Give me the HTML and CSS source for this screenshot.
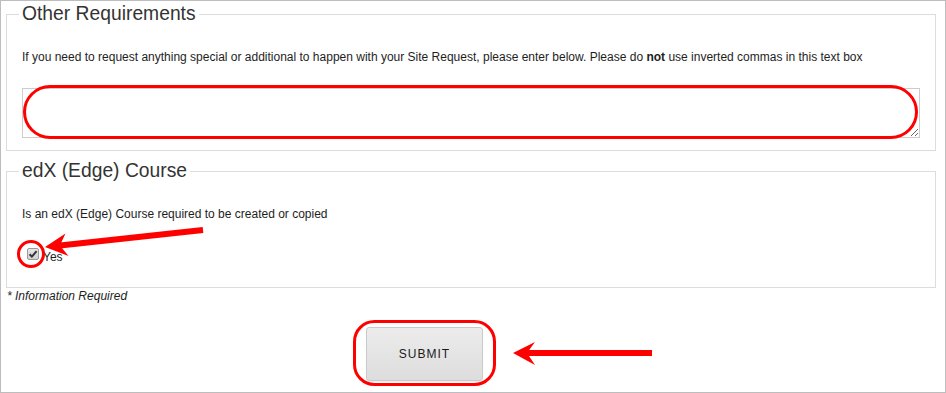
FILE: index.html
```html
<!DOCTYPE html>
<html>
<head>
<meta charset="utf-8">
<link rel="stylesheet" href="styles.css">
</head>
<body>
<div class="page">
  <fieldset class="group group-first">
    <legend class="group-title">Other Requirements</legend>
    <p class="group-text">If you need to request anything special or additional to happen with your Site Request, please enter below. Please do <b>not</b> use inverted commas in this text box</p>
    <textarea class="req-input"></textarea>
  </fieldset>
  <fieldset class="group group-second">
    <legend class="group-title">edX (Edge) Course</legend>
    <p class="group-text">Is an edX (Edge) Course required to be created or copied</p>
    <div class="check-row">
      <span class="check-box"><svg width="10" height="10" viewBox="0 0 10 10"><path d="M1.6 5.2 L3.9 7.6 L8.6 2.2" fill="none" stroke="#333" stroke-width="2"/></svg></span>
      <span class="check-label">Yes</span>
    </div>
  </fieldset>
  <p class="required-note">* Information Required</p>
  <div class="actions">
    <button class="submit-btn" type="button">SUBMIT</button>
  </div>
  <svg class="annotations" width="946" height="393" viewBox="0 0 946 393">
    <rect x="24.5" y="86.5" width="892" height="51" rx="25.5" ry="25.5" fill="none" stroke="#ff0000" stroke-width="3"/>
    <circle cx="31" cy="254" r="12.5" fill="none" stroke="#ff0000" stroke-width="3"/>
    <line x1="203" y1="230" x2="60" y2="245.5" stroke="#ff0000" stroke-width="6"/>
    <polygon points="45,247 65.5,233.5 59.9,245.4 68.5,256" fill="#ff0000"/>
    <rect x="354.5" y="321.5" width="140" height="63" rx="20" ry="20" fill="none" stroke="#ff0000" stroke-width="3"/>
    <line x1="652" y1="353" x2="526" y2="353" stroke="#ff0000" stroke-width="6"/>
    <polygon points="513,353 535,342 527,353 535,365" fill="#ff0000"/>
  </svg>
</div>
</body>
</html>
```
FILE: styles.css
```css
html, body {
  margin: 0;
  padding: 0;
  background: #ffffff;
}

.page {
  position: relative;
  width: 946px;
  height: 393px;
  box-sizing: border-box;
  border: 1px solid #bdbdbd;
  padding: 2px 9px 0 5px;
  font-family: "Liberation Sans", Arial, sans-serif;
  font-size: 12px;
  line-height: 15px;
  color: #1e1e1e;
}

.group {
  margin: 0;
  border: 1px solid #dcdcdc;
  padding: 0 15px 12px 15px;
  min-width: 0;
}

.group-second {
  margin-top: 9px;
  padding-bottom: 22px;
}

.group-title {
  margin-left: -3px;
  padding: 0 3px;
  font-size: 19.3px;
  line-height: 22px;
  color: #333333;
}

.group-text {
  margin: 25px 0 0 0;
}

.req-input {
  display: block;
  width: 100%;
  height: 50px;
  box-sizing: border-box;
  margin: 23px 0 0 0;
  border: 1px solid #cccccc;
  border-radius: 0;
  padding: 4px;
  font-family: "Liberation Sans", Arial, sans-serif;
  font-size: 12px;
  background: #ffffff;
  outline: none;
}

.check-row {
  display: flex;
  align-items: flex-start;
  margin-top: 26px;
}

.check-box {
  display: flex;
  align-items: center;
  justify-content: center;
  width: 12px;
  height: 12px;
  box-sizing: border-box;
  margin-left: 5px;
  border: 1px solid #9a9a9a;
  border-radius: 2px;
  background: linear-gradient(#e6e6e6, #d2d2d2);
}

.check-label {
  margin-top: 2px;
  margin-left: 4px;
}

.required-note {
  margin: 1px 0 0 1px;
  font-style: italic;
  color: #1e1e1e;
}

.actions {
  display: flex;
  padding-left: 360px;
  margin-top: 23px;
}

.submit-btn {
  width: 117px;
  height: 54px;
  box-sizing: border-box;
  border: 1px solid #cacaca;
  border-radius: 3px;
  background: linear-gradient(#ececec, #dddddd);
  box-shadow: 0 1px 1px rgba(0, 0, 0, 0.08);
  font-family: "Liberation Sans", Arial, sans-serif;
  font-size: 12px;
  letter-spacing: 1px;
  color: #1a1a1a;
  padding: 0;
}

.annotations {
  position: absolute;
  left: -1px;
  top: -1px;
  pointer-events: none;
}
```
